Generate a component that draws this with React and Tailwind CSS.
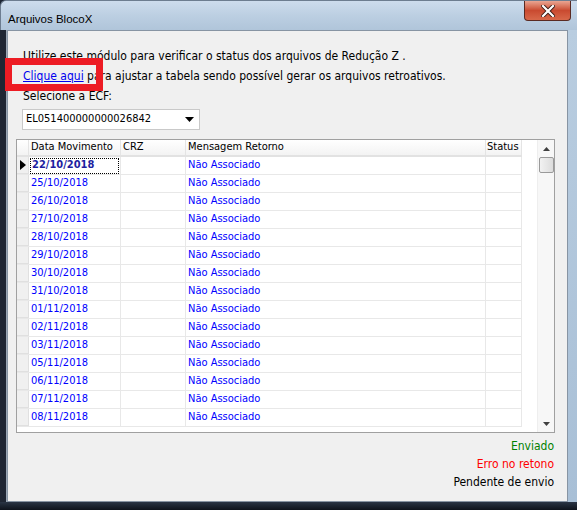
import React from 'react';

const font = { fontFamily: '"DejaVu Sans Condensed", "Liberation Sans", sans-serif' };

const dates = [
  '22/10/2018', '25/10/2018', '26/10/2018', '27/10/2018', '28/10/2018',
  '29/10/2018', '30/10/2018', '31/10/2018', '01/11/2018', '02/11/2018',
  '03/11/2018', '05/11/2018', '06/11/2018', '07/11/2018', '08/11/2018',
];

const Row = ({ date, first }) => (
  <div className="flex h-[18px] border-b border-[#e8e8e8]">
    <div className="w-[12px] shrink-0 bg-[#f0f0f0] border-r border-b border-[#e0e0e0] flex items-center justify-center">
      {first && (
        <svg width="6" height="10" viewBox="0 0 6 10"><path d="M0 0 L6 5 L0 10 Z" fill="#000" /></svg>
      )}
    </div>
    <div className="w-[92px] shrink-0 border-r border-[#e8e8e8] px-[1px] flex items-center">
      <div className={`h-[16px] flex items-center w-full pl-[1px] ${first ? 'border border-dotted border-black font-bold text-[#1e1ea0]' : 'text-[#0000ff]'}`}>
        {date}
      </div>
    </div>
    <div className="w-[65px] shrink-0 border-r border-[#e8e8e8]" />
    <div className="w-[300px] shrink-0 border-r border-[#e8e8e8] pl-[2px] flex items-center text-[#0000ff]">
      Não Associado
    </div>
    <div className="w-[36px] shrink-0 border-r border-[#e8e8e8]" />
  </div>
);

export default function App() {
  return (
    <div className="w-[577px] h-[510px] overflow-hidden bg-[#1c2433] flex flex-col" style={font}>
      {/* title bar */}
      <div className="h-[30px] shrink-0 flex items-start justify-between bg-gradient-to-b from-[#cddced] via-[#bccfe2] to-[#b0c5da] rounded-tl-[6px] border-l border-t border-[#6d7d90]">
        <span className="pl-[7px] pt-[11px] leading-[14px] text-black" style={{ fontFamily: '"Liberation Sans", sans-serif', fontSize: '11.5px' }}>
          Arquivos BlocoX
        </span>
        <div className="mr-[6px] w-[47px] h-[20px] rounded-b-[4px] border border-t-0 border-[#5a2a22] bg-gradient-to-b from-[#e9a592] via-[#c94a30] to-[#d8684a] flex items-center justify-center">
          <svg width="14" height="12" viewBox="0 0 14 12">
            <path d="M2 1 L12 11 M12 1 L2 11" stroke="#3a1a14" strokeWidth="4" strokeLinecap="square" />
            <path d="M2 1 L12 11 M12 1 L2 11" stroke="#ffffff" strokeWidth="2.2" strokeLinecap="square" />
          </svg>
        </div>
      </div>

      <div className="flex-1 flex bg-gradient-to-b from-[#aec2d6] to-[#9fb6cd]">
        <div className="w-[7px] shrink-0 bg-[#1f2633] border-r border-[#9aa6b4]" />
        <div className="w-[561px] h-[472px] bg-[#f0f0f0] border border-[#8794a3] relative flex flex-col text-[12px] text-black">
          <div className="pl-[15px] pt-[15px] leading-[20px]">
            <div>Utilize este módulo para verificar o status dos arquivos de Redução Z .</div>
            <div>
              <span className="text-[#0000ee] underline">Clique aqui</span> para ajustar a tabela sendo possível gerar os arquivos retroativos.
            </div>
            <div>Selecione a ECF:</div>
          </div>

          <div className="ml-[14px] mt-[3px] w-[178px] h-[21px] bg-white border border-[#c9c9c9] flex items-center justify-between pl-[3px] pr-[5px] text-[11px]">
            <span>EL051400000000026842</span>
            <svg width="9" height="5" viewBox="0 0 9 5"><path d="M0 0 L9 0 L4.5 5 Z" fill="#000" /></svg>
          </div>

          <div className="ml-[8px] mt-[9px] w-[539px] h-[294px] bg-white border border-[#a0a0a0] flex text-[11px]">
            <div className="flex flex-col w-[505px] shrink-0">
              <div className="flex h-[17px] border-b-2 border-[#e2e2e2] bg-gradient-to-b from-white to-[#f3f3f3]">
                <div className="w-[12px] shrink-0 border-r border-[#e4e4e4]" />
                <div className="w-[92px] shrink-0 border-r border-[#e4e4e4] pl-[2px] flex items-center">Data Movimento</div>
                <div className="w-[65px] shrink-0 border-r border-[#e4e4e4] pl-[2px] flex items-center">CRZ</div>
                <div className="w-[300px] shrink-0 border-r border-[#e4e4e4] pl-[2px] flex items-center">Mensagem Retorno</div>
                <div className="w-[36px] shrink-0 border-r border-[#e4e4e4] pl-[1px] flex items-center">Status</div>
              </div>
              {dates.map((d, i) => (
                <Row key={d} date={d} first={i === 0} />
              ))}
            </div>
            <div className="flex-1" />
            <div className="w-[17px] shrink-0 bg-[#f7f7f7] border-l border-[#eeeeee] flex flex-col items-center">
              <div className="h-[17px] flex items-center justify-center">
                <svg width="7" height="4" viewBox="0 0 7 4"><path d="M0 4 L3.5 0 L7 4 Z" fill="#404040" /></svg>
              </div>
              <div className="w-[15px] h-[16px] rounded-[2px] border border-[#9a9a9a] bg-gradient-to-r from-[#f2f2f2] to-[#dcdcdc]" />
              <div className="flex-1" />
              <div className="h-[17px] flex items-center justify-center">
                <svg width="7" height="4" viewBox="0 0 7 4"><path d="M0 0 L3.5 4 L7 0 Z" fill="#404040" /></svg>
              </div>
            </div>
          </div>

          <div className="mr-[13px] mt-[4px] flex flex-col items-end leading-[18px]">
            <span className="text-[#008000]">Enviado</span>
            <span className="text-[#ff0000]">Erro no retono</span>
            <span>Pendente de envio</span>
          </div>

          <div className="absolute left-[-3px] top-[27px] w-[98px] h-[33px] border-[7px] border-[#ed1c24]" />
        </div>
        <div className="flex-1 bg-gradient-to-b from-[#b9cde0] to-[#a8bfd6]" />
      </div>
      <div className="h-[8px] shrink-0 bg-gradient-to-b from-[#2a3545] to-[#0e131c]" />
    </div>
  );
}
